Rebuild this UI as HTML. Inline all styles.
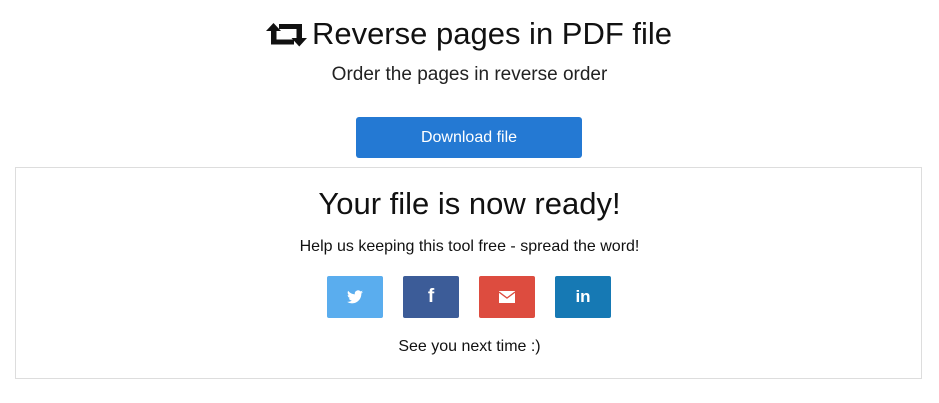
<!DOCTYPE html>
<html><head><meta charset="utf-8"><style>
body{margin:0;width:939px;height:403px;background:#fff;font-family:"Liberation Sans",sans-serif;color:#111;position:relative;overflow:hidden}
.a{position:absolute;left:0;width:939px;text-align:center;white-space:nowrap}
h1{font-weight:normal;font-size:31px;margin:0}
.btn{position:absolute;left:356px;top:117px;width:226px;height:41px;background:#2479d3;border-radius:3px;color:#fff;font-size:16px;line-height:41px;text-align:center}
.box{position:absolute;left:15px;top:167px;width:905px;height:210px;border:1px solid #ddd}
.s{position:absolute;top:276px;width:56px;height:42px;border-radius:2px;display:flex;align-items:center;justify-content:center;color:#fff;font-weight:bold}
</style></head><body>
<svg style="position:absolute;left:266px;top:22px" width="41" height="26" viewBox="0 0 41 26">
<path d="M0 9 L7.5 1 L15 9 Z" fill="#111"/><rect x="5" y="6" width="5.5" height="16" fill="#111"/><rect x="5" y="17.5" width="23" height="5" fill="#111"/>
<rect x="13" y="2" width="23" height="5" fill="#111"/><rect x="30.5" y="2" width="5.5" height="16" fill="#111"/><path d="M25.5 16 L33.25 24.5 L41 16 Z" fill="#111"/>
</svg>
<div class="a" style="top:16px;padding-left:45px;box-sizing:border-box;width:939px"><h1>Reverse pages in PDF file</h1></div>
<div class="a" style="top:64px;font-size:19px;color:#222">Order the pages in reverse order</div>
<div class="btn">Download file</div>
<div class="box"></div>
<div class="a" style="top:186px;font-size:31px">Your file is now ready!</div>
<div class="a" style="top:238px;font-size:16px">Help us keeping this tool free - spread the word!</div>
<div class="s" style="left:327px;background:#5aadee"><svg width="16" height="14" viewBox="0 0 24 20"><path fill="#fff" d="M24 2.4a10 10 0 0 1-2.8.8A5 5 0 0 0 23.3.4a10 10 0 0 1-3.1 1.2A4.9 4.9 0 0 0 11.8 6 14 14 0 0 1 1.7.9a4.9 4.9 0 0 0 1.5 6.6A4.9 4.9 0 0 1 1 6.9a4.9 4.9 0 0 0 3.9 4.8 5 5 0 0 1-2.2.1 4.9 4.9 0 0 0 4.6 3.4A9.9 9.9 0 0 1 0 17.3 14 14 0 0 0 7.5 19.5c9 0 14-7.5 14-14v-.6A10 10 0 0 0 24 2.4z"/></svg></div>
<div class="s" style="left:403px;background:#3c5c98;font-size:19px">f</div>
<div class="s" style="left:479px;background:#dd4c3f"><svg width="16" height="12" viewBox="0 0 16 12"><rect width="16" height="12" fill="#fff"/><path d="M0 1 L8 7 L16 1" stroke="#dd4c3f" stroke-width="1.3" fill="none"/></svg></div>
<div class="s" style="left:555px;background:#1679b4;font-size:17px">in</div>
<div class="a" style="top:338px;font-size:16px">See you next time :)</div>
</body></html>
